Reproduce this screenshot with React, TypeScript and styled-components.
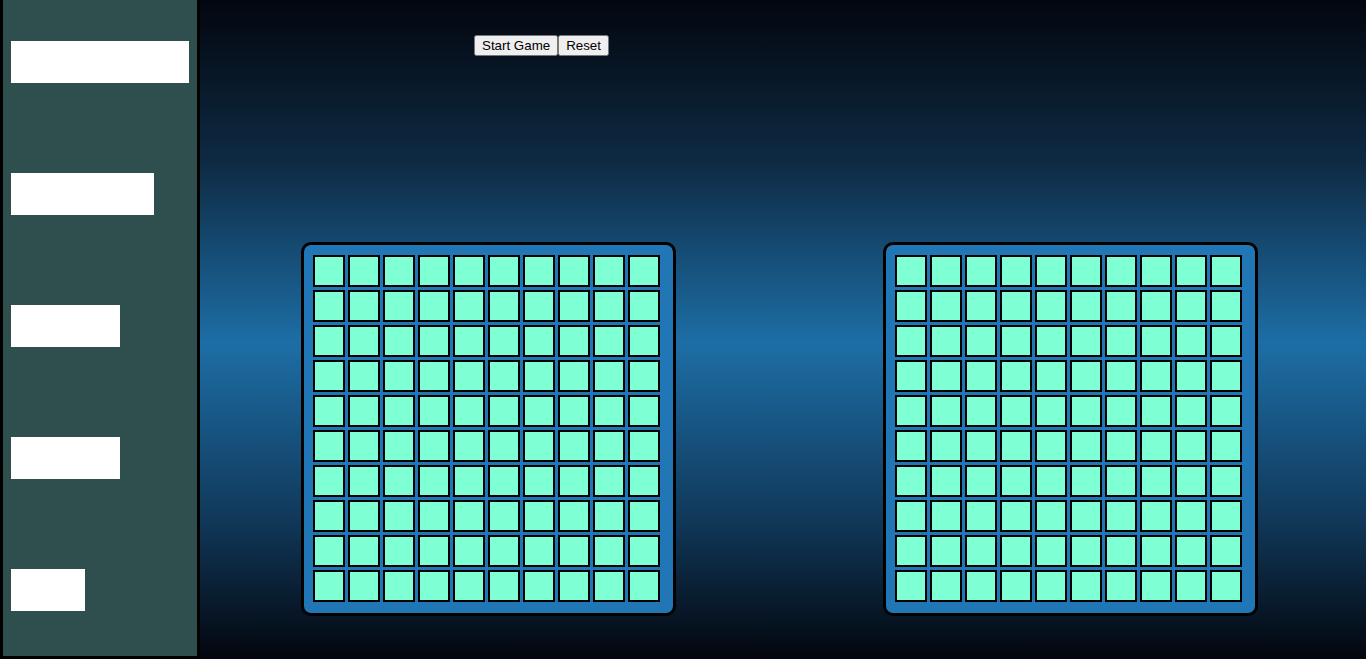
import React from "react";
import styled, { createGlobalStyle } from "styled-components";

const GlobalStyle = createGlobalStyle`
  html, body { margin: 0; padding: 0; }
  body { font-family: "Liberation Sans", Arial, sans-serif; overflow: hidden; }
`;

const Page = styled.div`
  display: flex;
  width: 1366px;
  height: 659px;
`;

const Sidebar = styled.aside`
  box-sizing: border-box;
  width: 200px;
  height: 659px;
  flex: none;
  background: #2f4f4f;
  border: 3px solid #000;
  border-top: none;
  padding: 41px 0 0 8px;
  display: flex;
  flex-direction: column;
  gap: 90px;
`;

const SideBox = styled.div<{ $w: number }>`
  width: ${(p) => p.$w}px;
  height: 42px;
  background: #ffffff;
`;

const Main = styled.main`
  flex: 1;
  height: 659px;
  background: linear-gradient(to bottom, #03060e 0%, #0e2b44 25%, #1d6ea6 52%, #113a5c 78%, #03060e 100%);
  display: flex;
  flex-direction: column;
`;

const Controls = styled.div`
  display: flex;
  padding: 35px 0 0 274px;
`;

const Button = styled.button`
  font-family: "Liberation Sans", Arial, sans-serif;
  font-size: 13.333px;
`;

const Boards = styled.div`
  display: flex;
  gap: 207px;
  padding-left: 101px;
  margin-top: 186px;
`;

const Board = styled.div`
  box-sizing: border-box;
  width: 375px;
  height: 374px;
  background: #2177b6;
  border: 3px solid #000;
  border-radius: 10px;
  padding: 10px 0 0 9px;
  display: grid;
  grid-template-columns: repeat(10, 32px);
  grid-template-rows: repeat(10, 32px);
  gap: 3px;
`;

const Cell = styled.div`
  box-sizing: border-box;
  width: 32px;
  height: 32px;
  background: #7fffd4;
  border: 2px solid #000;
`;

const widths = [178, 143, 109, 109, 74];
const cells = Array.from({ length: 100 }, (_, i) => i);

export default function App() {
  return (
    <>
      <GlobalStyle />
      <Page>
        <Sidebar>
          {widths.map((w, i) => (
            <SideBox key={i} $w={w} />
          ))}
        </Sidebar>
        <Main>
          <Controls>
            <Button>Start Game</Button>
            <Button>Reset</Button>
          </Controls>
          <Boards>
            <Board>
              {cells.map((c) => (
                <Cell key={c} />
              ))}
            </Board>
            <Board>
              {cells.map((c) => (
                <Cell key={c} />
              ))}
            </Board>
          </Boards>
        </Main>
      </Page>
    </>
  );
}
